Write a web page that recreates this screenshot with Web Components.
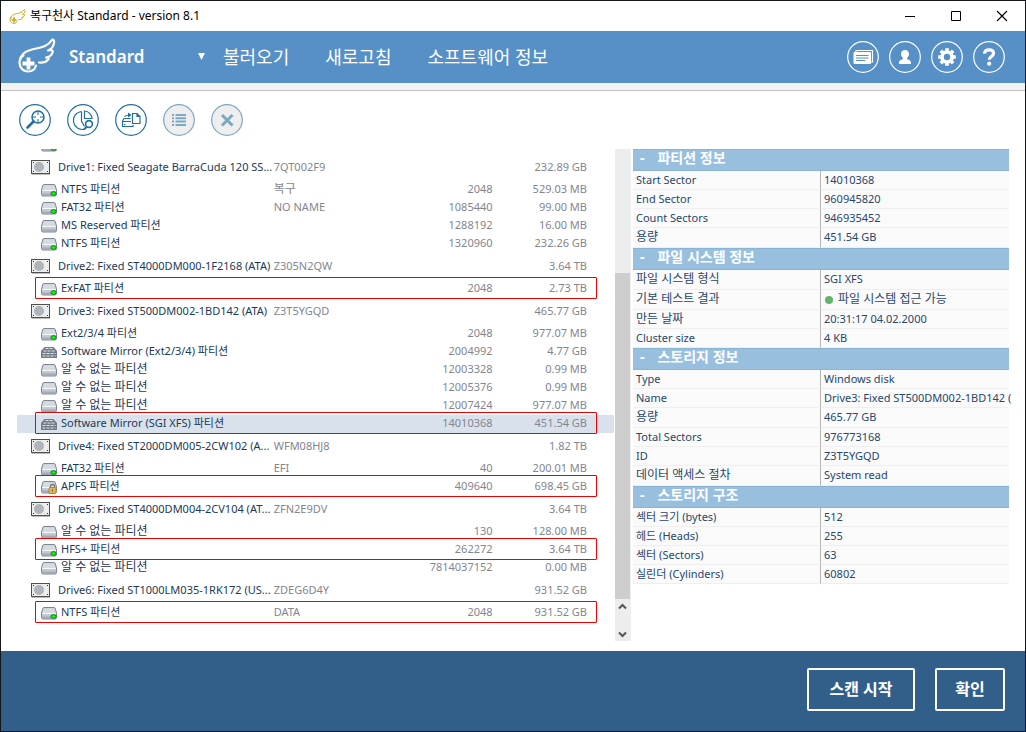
<!DOCTYPE html>
<html lang="ko">
<head>
<meta charset="utf-8">
<title>복구천사 Standard - version 8.1</title>
<style>
html,body{margin:0;height:100%}
body{font-family:"Noto Sans","Noto Sans CJK KR",sans-serif;font-size:12px;color:#1c3a56;background:#fff}
</style>
</head>
<body>
<recovery-app></recovery-app>
<script>
const define = (name, html, setup) => {
  const tpl = document.createElement('template');
  tpl.innerHTML = html;
  customElements.define(name, class extends HTMLElement {
    constructor() {
      super();
      this.attachShadow({mode: 'open'}).append(tpl.content.cloneNode(true));
    }
    connectedCallback() {
      if (setup && !this.ready) { this.ready = true; setup(this, this.shadowRoot); }
    }
  });
};

/* Cells that hold only Hangul are set one size larger than Latin ones */
const isHangul = text => /^[가-힣\s]+$/.test(text);

const WING = `<path d="M13.500 19.500C10.500 21 9.500 23.500 9.500 27c.2 5 4 8.500 8.500 8.500 4 0 7-2.500 8-6M10 24.500c.5-6 5-9 10.500-10.500C29 11.500 37 11.500 41.500 4.500c1.200-1.500 2.700-1 2.600 1.500-.2 4-2.600 7-6.100 8.500 3-.8 5.300-.5 4.700 1.500-1 3.500-3.500 5-6.700 5.500 2.600-.2 3.300.6 2.300 2-2 2.400-5.500 3.500-9.300 3" fill="none" stroke="currentColor" stroke-width="2.200" stroke-linecap="round" stroke-linejoin="round"/><path d="M18.500 21.500v12M12.500 27.500h12" stroke="currentColor" stroke-width="3.800"/>`;

/* Title bar */
define('title-bar', `
<style>
:host{display:flex;align-items:center;height:30px;background:#fff;color:#000;padding-left:8px}
.logo{width:17px;height:17px;color:#c9a717}
h1{flex:1;margin:0 0 0 4px;font-size:12px;font-weight:400;line-height:18px}
button{width:46px;height:30px;padding:0;border:0;background:none;color:#000}
button svg{display:block;margin:auto}
</style>
<svg class="logo" viewBox="7 1 39 37">${WING}</svg>
<h1><slot></slot></h1>
<button aria-label="최소화"><svg width="12" height="12"><path d="M1 6.500h10" stroke="currentColor"/></svg></button>
<button aria-label="최대화"><svg width="12" height="12"><path d="M1.500 1.500h9v9h-9z" fill="none" stroke="currentColor"/></svg></button>
<button aria-label="닫기"><svg width="12" height="12"><path d="M1 1l10 10M11 1L1 11" stroke="currentColor" stroke-width="1.200"/></svg></button>
`);

/* Round icon button used in the header and in the tool row */
const ICONS = {
  news: `<path d="M9 11V9.500h16.500V21H24" fill="none" stroke="currentColor" stroke-width="1.200"/><rect x="6.500" y="11" width="17.500" height="12" rx="1" fill="currentColor"/><path d="M9 14.500h12.500M9 17h12.500M9 19.500h9" stroke="#5790c7" stroke-width="1.100"/>`,
  user: `<path d="M16 9c-2.600 0-4 1.800-4 4 0 1.600.9 2.900 1.900 3.700 0 1.300-.3 1.700-1.400 2.100-1.600.6-2.600 1-2.600 4.200h12.200c0-3.200-1-3.600-2.600-4.200-1.100-.4-1.400-.8-1.400-2.100 1-.8 1.900-2.100 1.900-3.700 0-2.200-1.400-4-4-4z" fill="currentColor"/>`,
  gear: `<circle cx="16" cy="16" r="5" fill="none" stroke="currentColor" stroke-width="3.600"/><g stroke="currentColor" stroke-width="3.600"><path d="M16 7.200v3M16 21.800v3M7.200 16h3M21.800 16h3M9.800 9.800l2 2M20.200 20.200l2 2M9.800 22.200l2-2M20.200 11.800l2-2"/></g>`,
  help: `<path d="M11.500 12.700c.2-2.700 2-3.800 4.600-3.800 2.700 0 4.400 1.400 4.400 3.500 0 3.200-4.300 3.100-4.300 6.400" fill="none" stroke="currentColor" stroke-width="3.200"/><circle cx="16.200" cy="22.700" r="2.100" fill="currentColor"/>`,
  scan: `<circle cx="19" cy="13" r="6" fill="none" stroke="currentColor" stroke-width="1.500"/><path d="M19 7v4M19 15v4M13 13h4M21 13h4" stroke="currentColor"/><path d="M14.500 17.500L8.500 23.500" stroke="currentColor" stroke-width="2.600" stroke-linecap="round"/>`,
  pie: `<path d="M14.500 7.500a9 9 0 1 0 3 17.700M14.500 7.500v9.500l3 5.500" fill="none" stroke="currentColor" stroke-width="1.200"/><path d="M17.500 7a8 8 0 0 1 7.500 7.500h-7.500z" fill="none" stroke="currentColor" stroke-width="1.200"/><circle cx="22" cy="20" r="3.400" fill="none" stroke="currentColor" stroke-width="1.600"/><path d="M20 22.500l-3 3" stroke="currentColor" stroke-width="2"/>`,
  open: `<path d="M17.500 9.500h4.500l3 3v7h-7.500zM22 9.500v3h3M7 17.500h9M7.500 18v4.500h10.500v-1.500M7.500 17l1.500-2.500h6.500M9 20.500h1.500" fill="none" stroke="currentColor" stroke-width="1.200"/><path d="M9.500 12.500c2-1.500 3-1.500 4.500-1.500" fill="none" stroke="currentColor" stroke-width="1.200"/><path d="M13 8.500l3.500 2.500-3.500 2.500z" fill="currentColor"/>`,
  list: `<path d="M9 11h2M9 14.300h2M9 17.600h2M9 21h2M12.500 11H23M12.500 14.300H23M12.500 17.600H23M12.500 21H23" stroke="currentColor" stroke-width="2"/>`,
  close: `<path d="M11 11l10.500 10.500M21.500 11L11 21.500" stroke="currentColor" stroke-width="3"/>`
};
define('round-button', `
<style>
:host{display:block;color:#1f6f9f}
:host([tone=light]){color:#fff}
button{display:block;width:32px;height:32px;padding:0;border:0;background:none;color:inherit}
:host([tone=off]) button{color:#7ba9c2}
svg{display:block}
.ring{fill:none;stroke:currentColor;stroke-width:1.200}
:host([tone=off]) .ring{fill:#eee}
</style>
<button><svg width="32" height="32" viewBox="0 0 32 32"><circle class="ring" cx="16" cy="16" r="15.300"/><g></g></svg></button>
`, (host, root) => {
  root.querySelector('g').innerHTML = ICONS[host.getAttribute('icon')];
  const b = root.querySelector('button');
  b.setAttribute('aria-label', host.getAttribute('label'));
  b.disabled = host.getAttribute('tone') === 'off';
});

/* Blue header with the main menu */
define('app-header', `
<style>
:host{display:block}
header{display:flex;align-items:center;height:52px;padding:0 20px 0 9px;background:#5790c7;color:#fff}
.logo{width:48px;height:42px}
strong{margin-left:11px;width:129px;font-size:17px;line-height:24px;font-weight:600}
nav{flex:1;display:flex;gap:36px;font-size:18px;line-height:24px}
a{color:inherit;text-decoration:none}
nav svg{margin-right:-18px;align-self:center}
.actions{display:flex;gap:10px}
.strip{height:7px;background:#f2f2f2;border-bottom:1px solid #bfbfbf}
</style>
<header>
<svg class="logo" viewBox="0 0 48 42">${WING}</svg>
<strong>Standard</strong>
<nav><svg width="7" height="8"><path d="M0 0h7L3.500 7z" fill="#fff"/></svg><a href="#load">불러오기</a><a href="#refresh">새로고침</a><a href="#about">소프트웨어 정보</a></nav>
<div class="actions">
<round-button tone="light" icon="news" label="뉴스"></round-button>
<round-button tone="light" icon="user" label="사용자"></round-button>
<round-button tone="light" icon="gear" label="설정"></round-button>
<round-button tone="light" icon="help" label="도움말"></round-button>
</div>
</header>
<div class="strip"></div>
`);

/* Tool row */
define('tool-row', `
<style>:host{display:flex;gap:16px;padding:13px 18px}</style>
<round-button icon="scan" label="스캔"></round-button>
<round-button icon="pie" label="파티션 검색"></round-button>
<round-button icon="open" label="이미지 열기"></round-button>
<round-button icon="list" label="목록" tone="off"></round-button>
<round-button icon="close" label="제거" tone="off"></round-button>
`);

/* Drive and partition list */
const VOLUME = `<path d="M3 .5h10q.8 0 1.200.8L15.500 6v4.500q0 1.500-1.500 1.500H2Q.5 12 .5 10.500V6l1.300-4.700Q2.200.5 3 .5z" fill="#c3c8d1" stroke="#7f8796"/><path d="M3 1.200h10l1.700 5H1.300z" fill="#d6dae1"/><path d="M1.200 6.500h13.600" stroke="#f6f7f9"/><path d="M1.200 9.500h13.600v1.500H1.200z" fill="#a3aab8"/>`;
const GLYPHS = {
  drive: `<svg width="19" height="15"><rect x=".5" y=".5" width="18" height="13" fill="#ededed" stroke="#505050"/><path d="M1 14.500h18" stroke="#bdbdbd"/><circle cx="8" cy="7" r="5" fill="#afb4b8"/><path d="M2 2.500h1M16 2.500h1M2 11.500h1M16 11.500h1" stroke="#333"/></svg>`,
  plain: `<svg width="16" height="13">${VOLUME}</svg>`,
  ok: `<svg width="16" height="13">${VOLUME}<ellipse cx="12.500" cy="9.500" rx="2.600" ry="1.900" fill="#0f0" stroke="#187018" stroke-width=".9"/></svg>`,
  lock: `<svg width="16" height="13">${VOLUME}<path d="M9.500 7V5.500a2 2 0 0 1 4 0V7" fill="none" stroke="#777" stroke-width="1.300"/><rect x="8" y="6.500" width="7" height="6" rx="1" fill="#e8b44c" stroke="#a87a28" stroke-width=".8"/><path d="M11.500 8.500v2" stroke="#654"/></svg>`,
  raid: `<svg width="16" height="13"><path d="M3.500 1h9L16 5v7H0V5z" fill="#727c89"/><path d="M4.500 2.500h7M2.500 5h11M1.500 7.500h13M1.500 10h13" stroke="#e2e5ea" stroke-width="1.200" stroke-dasharray="3 1"/></svg>`
};
const ROWS = [
  ['ok', '', '', '', ''],
  ['drive', 'Drive1: Fixed Seagate BarraCuda 120 SS...', '7QT002F9', '', '232.89 GB'],
  ['ok', 'NTFS 파티션', '복구', '2048', '529.03 MB'],
  ['ok', 'FAT32 파티션', 'NO NAME', '1085440', '99.00 MB'],
  ['plain', 'MS Reserved 파티션', '', '1288192', '16.00 MB'],
  ['ok', 'NTFS 파티션', '', '1320960', '232.26 GB'],
  ['drive', 'Drive2: Fixed ST4000DM000-1F2168 (ATA)', 'Z305N2QW', '', '3.64 TB'],
  ['ok', 'ExFAT 파티션', '', '2048', '2.73 TB', 'mark'],
  ['drive', 'Drive3: Fixed ST500DM002-1BD142 (ATA)', 'Z3T5YGQD', '', '465.77 GB'],
  ['ok', 'Ext2/3/4 파티션', '', '2048', '977.07 MB'],
  ['raid', 'Software Mirror (Ext2/3/4) 파티션', '', '2004992', '4.77 GB'],
  ['plain', '알 수 없는 파티션', '', '12003328', '0.99 MB'],
  ['plain', '알 수 없는 파티션', '', '12005376', '0.99 MB'],
  ['plain', '알 수 없는 파티션', '', '12007424', '977.07 MB'],
  ['raid', 'Software Mirror (SGI XFS) 파티션', '', '14010368', '451.54 GB', 'mark selected'],
  ['drive', 'Drive4: Fixed ST2000DM005-2CW102 (A...', 'WFM08HJ8', '', '1.82 TB'],
  ['ok', 'FAT32 파티션', 'EFI', '40', '200.01 MB'],
  ['lock', 'APFS 파티션', '', '409640', '698.45 GB', 'mark'],
  ['drive', 'Drive5: Fixed ST4000DM004-2CV104 (AT...', 'ZFN2E9DV', '', '3.64 TB'],
  ['plain', '알 수 없는 파티션', '', '130', '128.00 MB'],
  ['ok', 'HFS+ 파티션', '', '262272', '3.64 TB', 'mark'],
  ['plain', '알 수 없는 파티션', '', '7814037152', '0.00 MB'],
  ['drive', 'Drive6: Fixed ST1000LM035-1RK172 (US...', 'ZDEG6D4Y', '', '931.52 GB'],
  ['ok', 'NTFS 파티션', 'DATA', '2048', '931.52 GB', 'mark']
];
define('drive-list', `
<style>
:host{display:flex;min-height:0}
.view{flex:1;overflow:hidden}
table{width:100%;margin-top:-13px;border-collapse:collapse;table-layout:fixed;font-size:11px;line-height:16px}
col.name{width:43%}col.num{width:19%}
tr{height:18px;position:relative}
tr.drive{height:27px}
td{padding:0 0 2px;white-space:nowrap;color:#84858f}
td:first-child{color:#1c3a56}
.ko{font-size:12px}
.cell{display:flex;align-items:center;gap:4px;padding-left:24px}
.drive .cell{gap:8px;padding-left:14px}
.cell svg{flex:none;margin-top:2px}
.n{text-align:right;padding-right:8px}
.n:last-child{padding-right:27px}
.selected{background:#d9e2ec}
.mark td:last-child::after{content:"";position:absolute;inset:-3px 17px -1px 18px;border:1px solid #f00000;border-radius:1px}
.bar{width:15px;margin-left:1px;background:#ecedef;display:flex;flex-direction:column}
.bar .space{flex:124}
.bar .thumb{flex:326;background:#cdcdcd}
.bar button{height:14px;margin-bottom:14px;padding:0;border:0;background:none}
.bar button:last-child{margin:0}
.bar svg{display:block;margin:auto}
</style>
<div class="view"><table><colgroup><col class="name"><col><col class="num"><col class="end"></colgroup><tbody></tbody></table></div>
<div class="bar"><div class="space"></div><div class="thumb"></div>
<button aria-label="위로"><svg width="9" height="7"><path d="M1 5.500l3.500-3.500L8 5.500" fill="none" stroke="#555" stroke-width="2"/></svg></button>
<button aria-label="아래로"><svg width="9" height="7"><path d="M1 1.500L4.500 5 8 1.500" fill="none" stroke="#555" stroke-width="2"/></svg></button></div>
`, (host, root) => {
  root.querySelector('tbody').innerHTML = ROWS.map(([kind, name, label, start, size, state = '']) =>
    `<tr class="${kind} ${state}"><td><div class="cell">${GLYPHS[kind]}<span class="${isHangul(name) ? 'ko' : ''}">${name}</span></div></td><td class="${isHangul(label) ? 'ko' : ''}">${label}</td><td class="n">${start}</td><td class="n">${size}</td></tr>`).join('');
});

/* Property sections */
const SECTIONS = {
  partition: {title: '파티션 정보', rows: [['Start Sector', '14010368'], ['End Sector', '960945820'], ['Count Sectors', '946935452'], ['용량', '451.54 GB', 'tall']]},
  files: {title: '파일 시스템 정보', rows: [['파일 시스템 형식', 'SGI XFS', 'tall'], ['기본 테스트 결과', '파일 시스템 접근 가능', 'tall', 'dot'], ['만든 날짜', '20:31:17 04.02.2000'], ['Cluster size', '4 KB']]},
  storage: {title: '스토리지 정보', rows: [['Type', 'Windows disk'], ['Name', 'Drive3: Fixed ST500DM002-1BD142 ('], ['용량', '465.77 GB', 'tall'], ['Total Sectors', '976773168'], ['ID', 'Z3T5YGQD'], ['데이터 액세스 절차', 'System read', 'tall']]},
  layout: {title: '스토리지 구조', rows: [['섹터 크기 (bytes)', '512'], ['헤드 (Heads)', '255'], ['섹터 (Sectors)', '63'], ['실린더 (Cylinders)', '60802']]}
};
define('property-section', `
<style>
:host{display:block}
h2{margin:0;height:20px;padding-left:7px;border:solid #8bb3d3;border-width:1px 0;background:#99bfdf;color:#fff;font-size:14px;line-height:16px;font-weight:700;display:flex;gap:13px}
table{width:100%;border-collapse:separate;border-spacing:0;table-layout:fixed;font-size:11px;line-height:16px}
tr{height:19px}
tr.tall{height:20px}
th,td{box-sizing:border-box;padding:0 0 1px 3px;background:#fafafa;border-bottom:1px solid #efefef;text-align:left;font-weight:400;white-space:nowrap;color:#27476a}
th{width:188px;border-right:1px solid #b5b5b5}
.ko{font-size:12px}
.dot::before{content:"";display:inline-block;width:8px;height:8px;margin:0 5px 0 1px;border-radius:50%;background:#5fb56c;vertical-align:-1px}
</style>
<h2><span>-</span><span class="t"></span></h2>
<table><tbody></tbody></table>
`, (host, root) => {
  const s = SECTIONS[host.getAttribute('name')];
  root.querySelector('.t').textContent = s.title;
  root.querySelector('tbody').innerHTML = s.rows.map(([k, v, tall = '', mark = '']) =>
    `<tr class="${tall}"><th scope="row" class="${isHangul(k) ? 'ko' : ''}">${k}</th><td class="${isHangul(v) ? 'ko' : ''} ${mark}">${v}</td></tr>`).join('');
});

/* Footer */
define('action-bar', `
<style>
:host{display:flex;justify-content:flex-end;align-items:flex-start;gap:20px;height:63px;padding:17px 20px 0;background:#315f89}
button{height:43px;min-width:70px;border:2px solid #fff;border-radius:2px;background:none;color:#fff;font:700 16px/20px "Noto Sans","Noto Sans CJK KR",sans-serif;padding:0 0 2px}
button:first-of-type{min-width:108px}
</style>
<button>스캔 시작</button><button>확인</button>
`);

define('recovery-app', `
<style>
:host{box-sizing:border-box;display:flex;flex-direction:column;min-height:100vh;border:1px solid #14171c}
main{flex:1;display:grid;grid-template-columns:minmax(0,614fr) minmax(0,376fr);gap:2px;padding:0 16px 10px}
drive-list{border-right:1px solid #f0f0f0}
</style>
<title-bar>복구천사 Standard - version 8.1</title-bar>
<app-header></app-header>
<tool-row></tool-row>
<main><drive-list></drive-list>
<section><property-section name="partition"></property-section><property-section name="files"></property-section><property-section name="storage"></property-section><property-section name="layout"></property-section></section></main>
<action-bar></action-bar>
`);
</script>
</body>
</html>
